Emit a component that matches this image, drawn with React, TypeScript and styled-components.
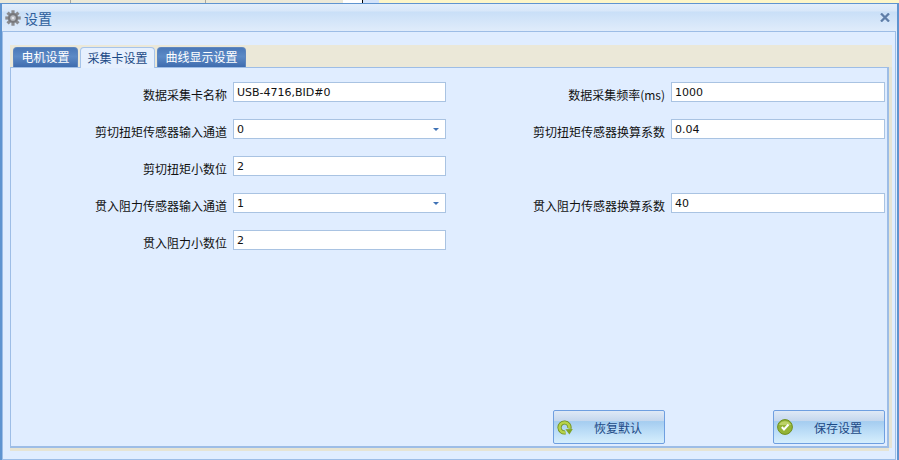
import { createGlobalStyle } from 'styled-components';
import styled from 'styled-components';

const Global = createGlobalStyle`
  html, body { margin: 0; padding: 0; background: #fff; }
  body { width: 899px; height: 460px; overflow: hidden; font-family: "Noto Sans CJK SC", "DejaVu Sans", sans-serif; }
`;

const Screen = styled.div`
  width: 899px;
  height: 460px;
  display: flex;
  flex-direction: column;
  box-sizing: border-box;
`;

const TopStrip = styled.div`
  height: 3px;
  flex-shrink: 0;
  background: linear-gradient(
    90deg,
    #ece9d8 0,
    #ece9d8 70px,
    #a8a8a0 70px,
    #a8a8a0 71px,
    #ece9d8 71px,
    #ece9d8 205px,
    #a8a8a0 205px,
    #a8a8a0 206px,
    #ece9d8 206px,
    #ece9d8 343px,
    #ffffff 343px,
    #ffffff 362px,
    #000000 362px,
    #000000 363px,
    #d3e3fa 363px,
    #d3e3fa 379px,
    #fdf6c8 379px,
    #fdf6c8 100%
  );
`;

const Win = styled.div`
  flex: 1;
  display: flex;
  flex-direction: column;
  border: 1px solid #5f94d0;
  border-bottom: 0;
  border-right-width: 2px;
  border-left-width: 2px;
  background: #e0edff;
  min-height: 0;
`;

const TitleBar = styled.div`
  height: 27px;
  flex-shrink: 0;
  display: flex;
  align-items: center;
  padding: 0 7px 0 3px;
  gap: 3px;
  background: linear-gradient(180deg, #e2eefb 0, #d8e7f9 7px, #c9dff7 8px, #e0ecfb 100%);
`;

const TitleText = styled.span`
  font-size: 14px;
  color: #2e5f9c;
  flex: 1;
`;

const Body = styled.div`
  flex: 1;
  display: flex;
  flex-direction: column;
  border: 1px solid #9dbde6;
  background: #e0edff;
  padding: 13px 3px 11px 7px;
  min-height: 0;
  margin-right: 1px;
`;

const TabStrip = styled.div`
  height: 22px;
  flex-shrink: 0;
  display: flex;
  align-items: flex-end;
  gap: 2px;
  padding-left: 3px;
  background: #ebe8d8;
`;

const Tab = styled.div<{ $active?: boolean }>`
  height: ${p => (p.$active ? 21 : 20)}px;
  box-sizing: border-box;
  padding: 0 ${p => (p.$active ? 6.5 : 7.5)}px 2px;
  display: flex;
  align-items: center;
  font-size: 12px;
  border-radius: 4px 4px 0 0;
  border: 1px solid ${p => (p.$active ? '#a6c4ea' : '#5f86bd')};
  border-bottom: 0;
  color: ${p => (p.$active ? '#1d4a86' : '#ffffff')};
  background: ${p =>
    p.$active ? '#e6f0fe' : 'linear-gradient(180deg, #4a78b8 0, #5c8ac6 45%, #3f6cae 100%)'};
  margin-bottom: ${p => (p.$active ? -1 : 0)}px;
  position: relative;
`;

const Panel = styled.div`
  flex: 1;
  display: flex;
  flex-direction: column;
  justify-content: space-between;
  border: 1px solid #9dbde6;
  border-bottom-width: 2px;
  border-right-width: 2px;
  background: #e0edff;
  box-shadow: 0 3px 0 #e6e4d4, 3px 0 0 #e6e4d4;
  padding: 14px 2px 2px 0;
  margin-right: 3px;
  min-height: 0;
`;

const Form = styled.div`
  display: grid;
  grid-template-columns: 213px 214px;
  grid-auto-rows: 20px;
  row-gap: 17px;
  column-gap: 225px;
  padding-left: 222px;
`;

const Field = styled.div`
  position: relative;
  height: 20px;
`;

const Label = styled.label`
  position: absolute;
  right: 100%;
  margin-right: 6px;
  top: 5px;
  white-space: nowrap;
  font-size: 12px;
  line-height: 16px;
  color: #111;
`;

const Box = styled.div`
  height: 20px;
  box-sizing: border-box;
  border: 1px solid #a9c3e2;
  background: #fff;
  display: flex;
  align-items: center;
  justify-content: space-between;
  padding: 1px 6px 0 3px;
  font-family: "DejaVu Sans", sans-serif;
  font-size: 11px;
  color: #111;
`;

const Arrow = styled.span`
  width: 0;
  height: 0;
  border-left: 3px solid transparent;
  border-right: 3px solid transparent;
  border-top: 3px solid #3f72b5;
`;

const Actions = styled.div`
  display: flex;
  justify-content: flex-end;
  gap: 108px;
`;

const Btn = styled.button`
  width: 112px;
  height: 34px;
  box-sizing: border-box;
  border: 1px solid #6f9fe0;
  border-radius: 2px;
  padding: 0 0 0 3px;
  display: flex;
  align-items: center;
  font-family: inherit;
  font-size: 12px;
  color: #1d4a86;
  background: linear-gradient(180deg, #dfe9f6 0, #c6d8ee 30%, #a5cdf0 33%, #c0e0f8 70%, #d6eefc 100%);
`;

const IconSlot = styled.span`
  width: 37px;
  display: flex;
  flex-shrink: 0;
`;

const Gear = () => (
  <svg width="16" height="16" viewBox="0 0 17 17">
    <g fill="#8a8b8f">
      {[0, 45, 90, 135, 180, 225, 270, 315].map(a => (
        <rect key={a} x="6.8" y="0.3" width="3.4" height="4.4" transform={`rotate(${a} 8.5 8.5)`} />
      ))}
    </g>
    <circle cx="8.5" cy="8.5" r="5.4" fill="#77787c" />
    <circle cx="8.5" cy="8.5" r="3" fill="#b9bcc2" />
    <circle cx="8.5" cy="8.5" r="1.4" fill="#e4e7ec" />
  </svg>
);

const Close = () => (
  <svg width="10" height="9" viewBox="0 0 10 9" style={{ marginBottom: 1 }}>
    <path d="M1 0.5 L9 8.5 M9 0.5 L1 8.5" stroke="#5f7ea8" strokeWidth="2.3" />
  </svg>
);

const RestoreIcon = () => (
  <svg width="16" height="15" viewBox="0 0 16 15">
    <path d="M12.4 8.5 A5 5 0 1 0 8.4 12.4" fill="none" stroke="#6f8f1c" strokeWidth="4.2" />
    <path d="M12.4 8.5 A5 5 0 1 0 8.4 12.4" fill="none" stroke="#b6d24a" strokeWidth="2.6" />
    <path d="M8.4 9.2 L15.8 9 L12.4 14.6 Z" fill="#7fa424" />
  </svg>
);

const SaveIcon = () => (
  <svg width="16" height="16" viewBox="0 0 16 16">
    <circle cx="8" cy="8" r="7.4" fill="#94b436" stroke="#6f8f1e" />
    <path d="M2 6 A6.5 6 0 0 1 14 6 Z" fill="#bdd268" />
    <path d="M4.8 8 L7 10.5 L11.5 5.5" fill="none" stroke="#fff" strokeWidth="2" />
  </svg>
);

const fields = [
  { label: '数据采集卡名称', value: 'USB-4716,BID#0' },
  { label: '数据采集频率(ms)', value: '1000' },
  { label: '剪切扭矩传感器输入通道', value: '0', select: true },
  { label: '剪切扭矩传感器换算系数', value: '0.04' },
  { label: '剪切扭矩小数位', value: '2' },
  null,
  { label: '贯入阻力传感器输入通道', value: '1', select: true },
  { label: '贯入阻力传感器换算系数', value: '40' },
  { label: '贯入阻力小数位', value: '2' },
];

export default function App() {
  return (
    <Screen>
      <Global />
      <TopStrip />
      <Win>
        <TitleBar>
          <Gear />
          <TitleText>设置</TitleText>
          <Close />
        </TitleBar>
        <Body>
          <TabStrip>
            <Tab>电机设置</Tab>
            <Tab $active>采集卡设置</Tab>
            <Tab>曲线显示设置</Tab>
          </TabStrip>
          <Panel>
            <Form>
              {fields.map((f, i) =>
                f ? (
                  <Field key={i}>
                    <Label>{f.label}</Label>
                    <Box>
                      {f.value}
                      {f.select && <Arrow />}
                    </Box>
                  </Field>
                ) : (
                  <Field key={i} />
                ),
              )}
            </Form>
            <Actions>
              <Btn>
                <IconSlot>
                  <RestoreIcon />
                </IconSlot>
                恢复默认
              </Btn>
              <Btn>
                <IconSlot>
                  <SaveIcon />
                </IconSlot>
                保存设置
              </Btn>
            </Actions>
          </Panel>
        </Body>
      </Win>
    </Screen>
  );
}
